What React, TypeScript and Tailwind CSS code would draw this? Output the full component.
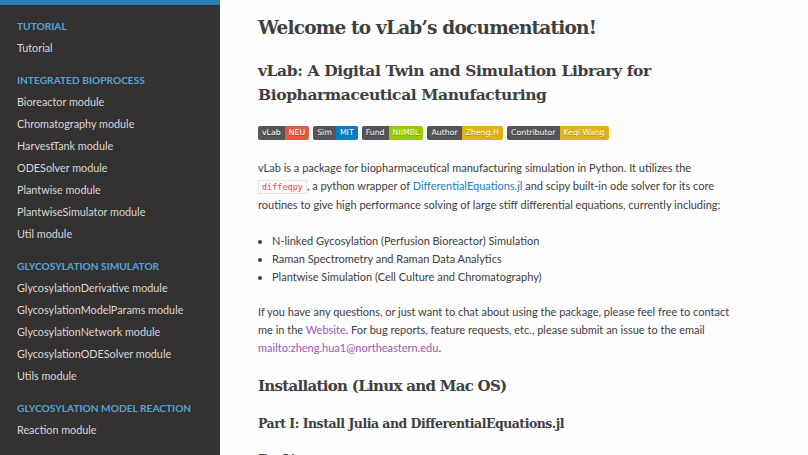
import React from "react";

const sections = [
  { caption: "TUTORIAL", items: ["Tutorial"] },
  {
    caption: "INTEGRATED BIOPROCESS",
    items: [
      "Bioreactor module",
      "Chromatography module",
      "HarvestTank module",
      "ODESolver module",
      "Plantwise module",
      "PlantwiseSimulator module",
      "Util module",
    ],
  },
  {
    caption: "GLYCOSYLATION SIMULATOR",
    items: [
      "GlycosylationDerivative module",
      "GlycosylationModelParams module",
      "GlycosylationNetwork module",
      "GlycosylationODESolver module",
      "Utils module",
    ],
  },
  { caption: "GLYCOSYLATION MODEL REACTION", items: ["Reaction module"] },
];

const badges = [
  { l: "vLab", r: "NEU", c: "bg-[#e05d44]" },
  { l: "Sim", r: "MIT", c: "bg-[#007ec6]" },
  { l: "Fund", r: "NIIMBL", c: "bg-[#97ca00]" },
  { l: "Author", r: "Zheng.H", c: "bg-[#dfb317]" },
  { l: "Contributor", r: "Keqi Wang", c: "bg-[#dfb317]" },
];

const slab = "font-['DejaVu_Serif',serif] font-bold text-[#404040]";

function Sidebar() {
  return (
    <nav className="w-[220px] shrink-0 bg-[#343131] h-[455px] overflow-hidden font-['Lato',sans-serif]">
      <div className="h-[5px] bg-[#2980b9]" />
      <div className="pt-[11px]">
        {sections.map(s => (
          <div key={s.caption} className="mb-[11px]">
            <p className="px-[17px] h-[20px] leading-[20px] text-[10.2px] font-bold text-[#55a5d9] whitespace-nowrap">{s.caption}</p>
            <ul className="mt-[1px]">
              {s.items.map(i => (
                <li key={i} className="px-[17px] h-[22px] leading-[22px] text-[10.8px] text-[#d9d9d9] whitespace-nowrap">{i}</li>
              ))}
            </ul>
          </div>
        ))}
      </div>
    </nav>
  );
}

export default function App() {
  return (
    <div className="flex w-[808px] h-[455px] overflow-hidden bg-[#fcfcfc]">
      <Sidebar />
      <main className="flex-1 pl-[38px] pt-[14px] font-['Lato',sans-serif] text-[11px] leading-[18px] text-[#404040]">
        <div className="w-[480px]">
          <h1 className={`${slab} text-[18.5px] leading-[28px] tracking-[-0.8px]`}>Welcome to vLab’s documentation!</h1>
          <h2 className={`${slab} text-[15.5px] leading-[24px] mt-[17px] tracking-[-0.4px]`}>
            vLab: A Digital Twin and Simulation Library for Biopharmaceutical Manufacturing
          </h2>
          {/* badges */}
          <div className="flex gap-[4px] mt-[19px] font-['DejaVu_Sans',sans-serif] text-[7.8px] leading-[14px] text-white">
            {badges.map(b => (
              <span key={b.l} className="flex h-[14px] rounded-[2px] overflow-hidden [text-shadow:0_1px_0_rgba(1,1,1,0.3)]">
                <span className="bg-[#555] px-[4px]">{b.l}</span>
                <span className={`${b.c} px-[4px]`}>{b.r}</span>
              </span>
            ))}
          </div>
          <p className="mt-[19px]">
            vLab is a package for biopharmaceutical manufacturing simulation in Python. It utilizes the{" "}
            <code className="font-['DejaVu_Sans_Mono',monospace] text-[8.5px] text-[#e74c3c] bg-white border border-[#e1e4e5] px-[3px] py-[1px]">diffeqpy</code>
            , a python wrapper of <span className="text-[#2980b9]">DifferentialEquations.jl</span> and scipy built-in ode solver for its core routines to give high performance solving of large stiff differential equations, currently including:
          </p>
          <ul className="mt-[18px] pl-[14px] list-disc">
            <li>N-linked Gycosylation (Perfusion Bioreactor) Simulation</li>
            <li>Raman Spectrometry and Raman Data Analytics</li>
            <li>Plantwise Simulation (Cell Culture and Chromatography)</li>
          </ul>
          <p className="mt-[17px]">
            If you have any questions, or just want to chat about using the package, please feel free to contact me in the{" "}
            <span className="text-[#9b59b6]">Website</span>. For bug reports, feature requests, etc., please submit an issue to the email{" "}
            <span className="text-[#9b59b6]">mailto:zheng.hua1@northeastern.edu</span>.
          </p>
          <h2 className={`${slab} text-[15px] leading-[24px] mt-[17px] tracking-[-0.7px]`}>Installation (Linux and Mac OS)</h2>
          <h3 className={`${slab} text-[12.5px] leading-[20px] mt-[16px] tracking-[-0.5px]`}>Part I: Install Julia and DifferentialEquations.jl</h3>
          <h4 className={`${slab} text-[12px] leading-[18px] mt-[17px] tracking-[-0.4px]`}>For Linux</h4>
        </div>
      </main>
    </div>
  );
}
